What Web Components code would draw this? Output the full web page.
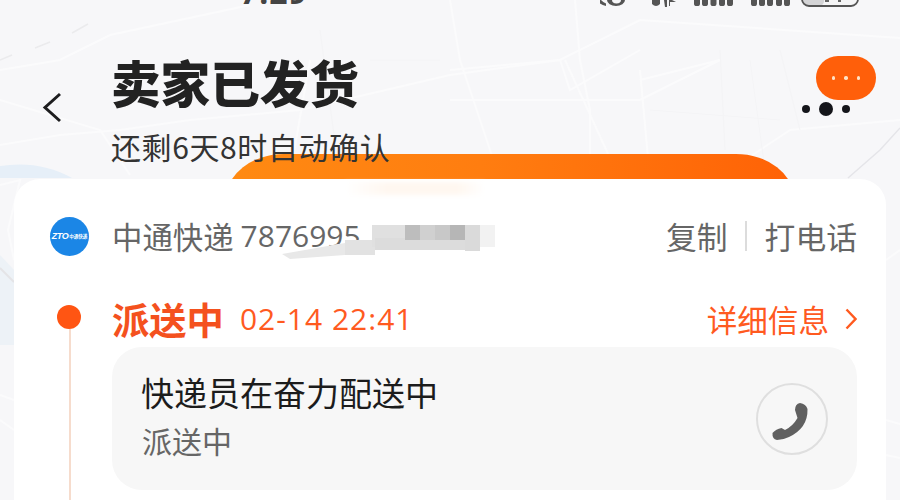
<!doctype html>
<html><head><meta charset="utf-8">
<style>
html,body{margin:0;padding:0;background:#f7f7f9}
body{font-family:"Noto Sans CJK SC","Noto Sans",sans-serif}
</style></head>
<body>
<order-app></order-app>
<script>
const FONT='"Noto Sans CJK SC","Noto Sans",sans-serif';
function def(name,html){
  customElements.define(name,class extends HTMLElement{
    constructor(){super();this.attachShadow({mode:'open'}).innerHTML=html;}
  });
}
def('map-bg',`<style>:host{position:absolute;inset:0;display:block}svg{display:block}</style>
<svg width="900" height="500" viewBox="0 0 900 500">
<rect width="900" height="500" fill="#f7f7f9"/>
<g fill="none" stroke="#fbfbfc" stroke-width="2">
<path d="M0 145 L60 135 L120 130 L190 120 L300 110 L450 75 L560 60 L640 20 L900 38"/>
<path d="M0 70 L60 60 L110 35 L250 5"/>
<path d="M0 100 L100 130 L130 175"/>
<path d="M450 70 L560 60 L570 90 L640 50"/>
<path d="M565 60 L620 180"/>
<path d="M575 0 L580 60 L590 110 L590 180"/>
<path d="M640 80 L700 65 L720 60 L640 100 L450 100"/>
<path d="M640 70 L650 180"/>
<path d="M310 60 L290 175"/>
<path d="M450 0 L460 60 L500 180"/>
<path d="M0 185 L20 180 L8 230 L14 260"/>
<path d="M0 420 L14 430 M0 395 L14 400"/>
<path d="M886 420 L900 424 M886 455 L900 458 M886 260 L900 250"/>
<path d="M730 170 L790 130 L900 120"/>
</g>
<g fill="none" stroke="#f4f4f6" stroke-width="1">
<path d="M320 30 L340 180 M720 50 L725 150 M750 60 L765 170 M780 50 L800 130 M370 60 L440 60 M650 110 L780 120"/>
</g>
<path d="M0 60 L12 55 M35 48 L50 42 M72 33 L88 24" fill="none" stroke="#ebebed" stroke-width="1.500"/>
<path d="M0 166 Q40 160 72 178 L0 178Z" fill="#e6eff8"/>
<path d="M0 255 L14 270 L14 345 L0 345Z" fill="#edf2f7"/>
<path d="M0 268 L14 282" stroke="#e4e4e7" stroke-width="2"/>
<path d="M848 178 L880 150 L900 128" fill="none" stroke="#e5e5e9" stroke-width="1.500"/>
</svg>`);

def('status-bar',`<style>
:host{display:flex;height:13px;overflow:hidden;position:relative;padding-left:240px;box-sizing:border-box}
.t{font:bold 32px/32px "Noto Sans","Liberation Sans",sans-serif;color:#444;letter-spacing:1px;height:32px;margin-top:-24px;flex:none;width:70px;white-space:nowrap}
svg{display:block;flex:none}
</style>
<div class="t">7:29</div>
<svg width="300" height="13" viewBox="600 0 300 13" style="margin-left:290px">
<g fill="#555">
<path d="M597 0 Q600 5 606 6 L606 3.500 Q603 2 601 0Z"/>
<path d="M607 0 A9 6 0 0 0 625 0 L621 0 A4 3 0 0 1 612 0Z"/>
<path d="M652 0 H660 V4 Q656 8 652 4Z"/>
<path d="M664 0H667V7H665ZM669 0H672L676 2H670V6H669Z"/>
<rect x="694" y="-4" width="6" height="10" rx="2.600"/><rect x="702" y="-4" width="6" height="10" rx="2.600"/><rect x="710.500" y="-4" width="6" height="10" rx="2.600"/><rect x="719" y="-4" width="6" height="10" rx="2.600"/><rect x="727" y="-4" width="6" height="10" rx="2.600"/>
<rect x="751" y="-4" width="6" height="10" rx="2.600"/><rect x="759" y="-4" width="6" height="10" rx="2.600"/><rect x="767" y="-4" width="6" height="10" rx="2.600"/><rect x="776" y="-4" width="6" height="10" rx="2.600"/><rect x="784" y="-4" width="6" height="10" rx="2.600"/>
</g>
<rect x="802" y="-20" width="56" height="26" rx="7" fill="#f5f5f6"/>
<rect x="802" y="-20" width="22" height="26" rx="5" fill="#d4d4d6"/>
<rect x="802" y="-20" width="56" height="26" rx="7" fill="none" stroke="#555" stroke-width="1.800"/>
<rect x="825" y="0" width="4" height="2" fill="#666"/><rect x="838" y="0" width="3" height="2" fill="#666"/>
</svg>`);

def('page-head',`<style>
:host{display:flex;height:141px;box-sizing:border-box;position:relative}
.back{flex:none;width:112px;padding-top:79px;box-sizing:border-box}
.back svg{display:block;margin-left:42px}
.txt{flex:1;min-width:0}
.title{font:900 49.600px/1 ${FONT};color:#222;margin-top:44px;height:58px;margin-left:-1px}
.sub{font:400 30px/36px ${FONT};color:#333;margin-top:13px;margin-left:-1px;white-space:nowrap;letter-spacing:.6px}
.float{position:absolute;left:816px;top:43px;width:60px;height:44px;border-radius:22px;background:#ff5f0a;display:flex;align-items:center;justify-content:center;gap:9px}
.float i{width:3.500px;height:3.500px;border-radius:50%;background:#ffe4c8;display:block}
.dots{position:absolute;left:802px;top:88px;height:14px;display:flex;align-items:center;gap:9px;margin-top:-1px;padding-top:2px}
.dots b{display:block;border-radius:50%;background:#14151a}
</style>
<div class="back"><svg width="20" height="32" viewBox="0 0 20 32"><path d="M18 2 L3 15.500 L18 29" fill="none" stroke="#1d1d1f" stroke-width="3"/></svg></div>
<div class="txt"><div class="title">卖家已发货</div><div class="sub">还剩6天8时自动确认</div></div>
<div class="dots"><b style="width:8px;height:8px"></b><b style="width:14px;height:14px"></b><b style="width:8px;height:8px"></b></div>
<div class="float"><i></i><i></i><i></i></div>`);

def('promo-banner',`<style>
:host{display:block;height:25px;margin-left:226px;width:568px;overflow:hidden}
div{height:70px;border-radius:58px 58px 0 0/45px 45px 0 0;background:linear-gradient(90deg,#ff8a12 0%,#ff7d10 45%,#ff6206 100%)}
</style><div></div>`);

def('carrier-logo',`<style>
:host{display:flex;flex:none;width:39px;height:39px;border-radius:50%;background:#1b86e6;color:#fff;align-items:center;justify-content:center;gap:1px;overflow:hidden;white-space:nowrap}
.a{font:italic 700 9px/1 "Liberation Sans",sans-serif;letter-spacing:-.4px}
.b{font:700 4.500px/1 ${FONT}}
</style><span class="a">ZTO</span><span class="b">中通快递</span>`);

def('waybill-row',`<style>
:host{display:flex;align-items:center;height:36px;position:relative;font:400 30.400px/36px ${FONT};color:#666;white-space:nowrap}
.name{margin-left:23px;margin-top:-3px}
.no{font-family:"Open Sans","Noto Sans",sans-serif;margin-left:7px;font-size:30px;margin-top:-3px}
.acts{margin-left:auto;display:flex;align-items:center;margin-top:-3px;font-size:30.800px}
.sep{width:2px;height:30px;background:#dcdcdc;margin:0 18px 0 17px}
.smear{position:absolute;left:232px;top:1px;display:block}
carrier-logo{margin-top:-1px}
</style>
<carrier-logo></carrier-logo>
<span class="name">中通快递</span><span class="no">7876995</span>
<svg class="smear" width="230" height="50" viewBox="282 220 230 50">
<defs><filter id="b"><feGaussianBlur stdDeviation=".5"/></filter></defs>
<g filter="url(#b)">
<path d="M282 254 L345 243 L375 236 L364 226 L495 225 L495 251 L380 255 L350 262 L290 262Z" fill="#fff"/>
<path d="M282 254 L345 243 L345 255 L290 259Z" fill="#e8e8e8"/>
<rect x="345" y="240" width="30" height="15" fill="#e2e2e2"/>
<rect x="372" y="225" width="33" height="22" fill="#e0e0e0"/>
<rect x="375" y="238" width="60" height="12" fill="#dcdcdc"/>
<rect x="405" y="225" width="15" height="15" fill="#bdbdbd"/>
<rect x="420" y="225" width="15" height="15" fill="#d0d0d0"/>
<rect x="435" y="225" width="15" height="15" fill="#c8c8c8"/>
<rect x="450" y="225" width="15" height="15" fill="#b6b6b6"/>
<rect x="435" y="240" width="30" height="10" fill="#dcdcdc"/>
<rect x="465" y="225" width="15" height="26" fill="#dadada"/>
<rect x="480" y="225" width="15" height="22" fill="#f2f2f2"/>
</g></svg>
<div class="acts"><span>复制</span><span class="sep"></span><span>打电话</span></div>`);

def('track-head',`<style>
:host{display:flex;align-items:center;height:44px;white-space:nowrap;color:#ff5a1f}
.st{font:700 37.300px/44px ${FONT};color:#f4511e}
.tm{font:400 30px/44px "Open Sans","Noto Sans",sans-serif;margin-left:16px;letter-spacing:1px}
.more{margin-left:auto;display:flex;align-items:center;font:400 30.600px/44px ${FONT};gap:16px}
svg{display:block}
</style>
<span class="st">派送中</span><span class="tm">02-14 22:41</span>
<span class="more">详细信息<svg width="12" height="22" viewBox="0 0 12 22"><path d="M1.500 1.500 L10.500 11 L1.500 20.500" fill="none" stroke="#ff5a1f" stroke-width="2.400"/></svg></span>`);

def('call-button',`<style>
:host{display:flex;flex:none;width:72px;height:72px;box-sizing:border-box;border:2px solid #dfdfdf;border-radius:50%;align-items:center;justify-content:center}
svg{display:block}
</style>
<svg width="68" height="68" viewBox="2 2 68 68">
<path fill="#606060" d="M44 20 Q50 21 51.500 26 Q52 45 33 54 Q27 57 21 57 Q16 56 16.500 50 Q20 46 25.500 45 L29 47 Q37 43 41.500 35 L39 27 Q39 21 44 20Z"/>
</svg>`);

def('track-card',`<style>
:host{display:flex;align-items:center;box-sizing:border-box;height:143px;border-radius:30px;background:#f7f7f7;padding:0 29px 0 29px}
.tx{flex:1;min-width:0;padding-bottom:6px}
.a{font:400 33px/40px ${FONT};color:#1c1c1c}
.b{font:400 30px/40px ${FONT};color:#666;margin-top:8px;margin-left:1px}
</style>
<div class="tx"><div class="a"><slot name="a"></slot></div><div class="b"><slot name="b"></slot></div></div><call-button></call-button>`);

def('track-item',`<style>
:host{display:grid;grid-template-columns:38px 1fr;column-gap:24px}
.rail{display:flex;flex-direction:column;align-items:center;padding-top:8px}
.dot{width:24px;height:24px;border-radius:50%;background:#ff5513;flex:none}
.line{width:2px;flex:1;background:#f6dccd;margin-left:2px}
.c{display:flex;flex-direction:column;gap:6px;min-width:0}
</style>
<div class="rail"><div class="dot"></div><div class="line"></div></div>
<div class="c"><track-head></track-head><slot></slot><div style="height:40px"></div></div>`);

def('order-card',`<style>
:host{display:block;margin:0 14px;background:#fff;border-radius:26px 26px 0 0;box-sizing:border-box;padding:40px 29px 0 36px;height:340px;position:relative}
.gap{height:42px}
.glow{position:absolute;left:331px;top:3px;width:140px;height:13px;background:linear-gradient(90deg,#fff,#fff7f0 30%,#fff7f0 80%,#fff);filter:blur(2px)}
</style>
<div class="glow"></div>
<waybill-row></waybill-row><div class="gap"></div><slot></slot>`);

def('order-app',`<style>
:host{display:block;width:900px;height:500px;overflow:hidden;position:relative;font-family:${FONT}}
.fg{position:relative;display:flex;flex-direction:column}
</style>
<map-bg></map-bg>
<div class="fg">
<status-bar></status-bar>
<page-head></page-head>
<promo-banner></promo-banner>
<order-card>
<track-item>
<track-card><span slot="a">快递员在奋力配送中</span><span slot="b">派送中</span></track-card>
</track-item>
</order-card>
</div>`);
</script>
</body></html>
